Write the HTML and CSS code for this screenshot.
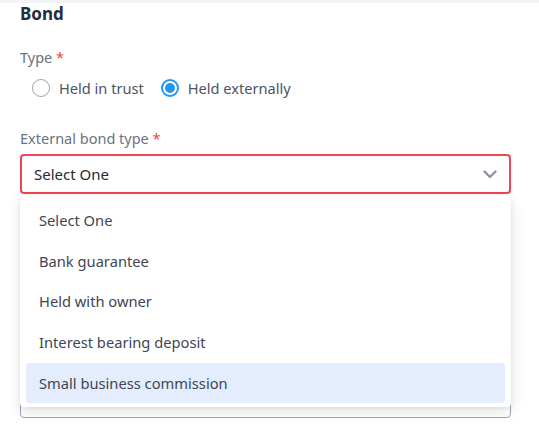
FILE: index.html
```html
<!DOCTYPE html>
<html>
<head>
<meta charset="utf-8">
<link rel="stylesheet" href="styles.css">
</head>
<body>
<div class="topbar"></div>
<div class="section">
  <h2 class="title">Bond</h2>
  <div class="field">
    <div class="label">Type <span class="req">*</span></div>
    <div class="radios">
      <label class="radio"><span class="circle"></span>Held in trust</label>
      <label class="radio"><span class="circle checked"></span>Held externally</label>
    </div>
  </div>
  <div class="field select-field">
    <div class="label">External bond type <span class="req">*</span></div>
    <div class="select">
      <span>Select One</span>
      <svg class="chev" width="14" height="9" viewBox="0 0 14 9"><path d="M1.5 1.5 L7 7 L12.5 1.5" fill="none" stroke="#8a93a3" stroke-width="2.4" stroke-linecap="round" stroke-linejoin="round"/></svg>
    </div>
    <div class="menu">
      <div class="item">Select One</div>
      <div class="item">Bank guarantee</div>
      <div class="item">Held with owner</div>
      <div class="item">Interest bearing deposit</div>
      <div class="item active">Small business commission</div>
    </div>
  </div>
  <div class="textarea"></div>
</div>
</body>
</html>
```
FILE: styles.css
```css
* { box-sizing: border-box; }
html, body { min-height: 447px; }
body {
  margin: 0;
  background: #ffffff;
  font-family: "Noto Sans", "Open Sans", sans-serif;
  color: #374151;
}
.topbar {
  height: 3px;
  background: #f3f4f6;
}
.section {
  padding: 0 28px 20px 20px;
}
.title {
  margin: 0;
  font-size: 17px;
  font-weight: 700;
  color: #1f2d3d;
  line-height: 22px;
}
.field {
  margin-top: 21px;
}
.label {
  font-size: 14.5px;
  color: #6b7280;
  line-height: 22px;
}
.req {
  color: #ef4444;
}
.radios {
  display: flex;
  gap: 17px;
  padding-left: 12px;
  margin-top: 10px;
}
.radio {
  display: flex;
  align-items: center;
  gap: 9px;
  font-size: 14.6px;
  color: #4b5563;
  line-height: 20px;
}
.circle {
  width: 18px;
  height: 18px;
  border-radius: 50%;
  border: 1.5px solid #9ca3af;
  background: #fff;
  position: relative;
}
.circle.checked {
  border: 2px solid #2196f3;
}
.circle.checked::after {
  content: "";
  position: absolute;
  left: 2px;
  top: 2px;
  width: 10px;
  height: 10px;
  border-radius: 50%;
  background: #2196f3;
}
.select-field {
  position: relative;
  margin-top: 29px;
}
.select {
  margin-top: 5px;
  height: 40px;
  border: 2px solid #ef4452;
  border-radius: 4px;
  display: flex;
  align-items: center;
  justify-content: space-between;
  padding: 0 12px 0 12px;
  font-size: 15px;
  color: #1f2937;
}
.menu {
  position: absolute;
  left: 0;
  right: 0;
  top: 69px;
  background: #fff;
  border-radius: 4px;
  box-shadow: 0 4px 14px rgba(0,0,0,0.12), 0 1px 4px rgba(0,0,0,0.06);
  padding: 3.5px 6px;
  z-index: 2;
}
.item {
  height: 40.8px;
  display: flex;
  align-items: center;
  padding-left: 13px;
  font-size: 14.7px;
  color: #3f4653;
  border-radius: 4px;
}
.item.active {
  background: #e3edfd;
}
.textarea {
  height: 175px;
  border: 1px solid #9ca3af;
  border-radius: 4px;
  margin-top: 49px;
}
```
